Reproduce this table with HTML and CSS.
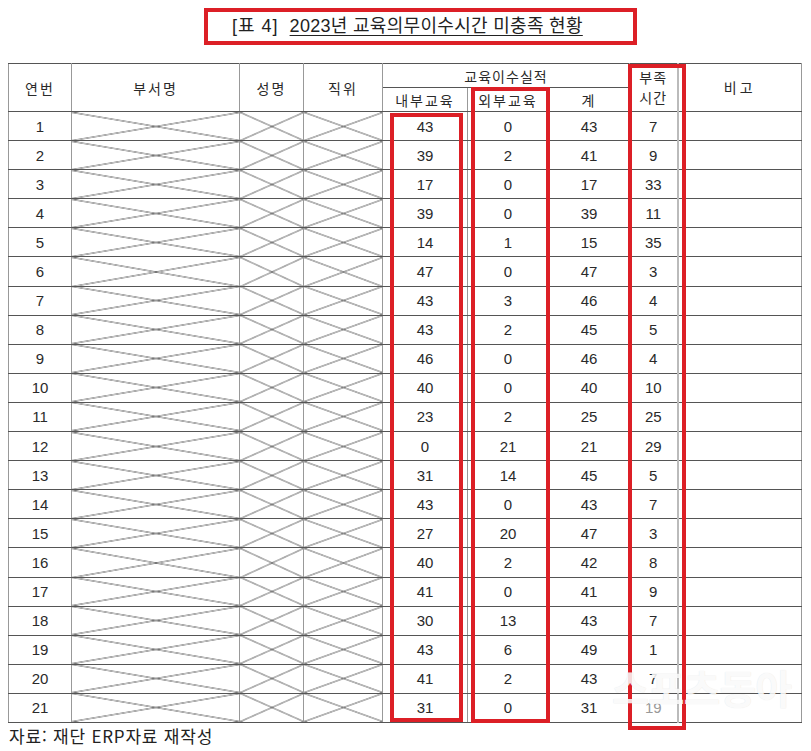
FILE: index.html
```html
<!DOCTYPE html>
<html lang="ko">
<head>
<meta charset="utf-8">
<link rel="stylesheet" href="styles.css">
</head>
<body>
<div class="page">
  <div class="title-row">
    <div class="title-box"><span class="t-label">[표 4]</span> <span class="t-main">2023년 교육의무이수시간 미충족 현황</span></div>
  </div>
  <div class="table-wrap">
    <table class="grid">
      <colgroup>
        <col class="c-no"><col class="c-dept"><col class="c-name"><col class="c-pos">
        <col class="c-in"><col class="c-out"><col class="c-sum"><col class="c-lack"><col class="c-note">
      </colgroup>
      <thead>
        <tr class="h1">
          <th rowspan="2">연번</th>
          <th rowspan="2">부서명</th>
          <th rowspan="2">성명</th>
          <th rowspan="2">직위</th>
          <th colspan="3" class="grp">교육이수실적</th>
          <th rowspan="2" class="lack"><span class="ln">부족</span><span class="ln">시간</span></th>
          <th rowspan="2" class="note">비고</th>
        </tr>
        <tr class="h2">
          <th>내부교육</th>
          <th>외부교육</th>
          <th>계</th>
        </tr>
      </thead>
      <tbody>
        <tr><td>1</td><td class="x"></td><td class="x"></td><td class="x"></td><td>43</td><td>0</td><td>43</td><td>7</td><td class="note"></td></tr>
        <tr><td>2</td><td class="x"></td><td class="x"></td><td class="x"></td><td>39</td><td>2</td><td>41</td><td>9</td><td class="note"></td></tr>
        <tr><td>3</td><td class="x"></td><td class="x"></td><td class="x"></td><td>17</td><td>0</td><td>17</td><td>33</td><td class="note"></td></tr>
        <tr><td>4</td><td class="x"></td><td class="x"></td><td class="x"></td><td>39</td><td>0</td><td>39</td><td>11</td><td class="note"></td></tr>
        <tr><td>5</td><td class="x"></td><td class="x"></td><td class="x"></td><td>14</td><td>1</td><td>15</td><td>35</td><td class="note"></td></tr>
        <tr><td>6</td><td class="x"></td><td class="x"></td><td class="x"></td><td>47</td><td>0</td><td>47</td><td>3</td><td class="note"></td></tr>
        <tr><td>7</td><td class="x"></td><td class="x"></td><td class="x"></td><td>43</td><td>3</td><td>46</td><td>4</td><td class="note"></td></tr>
        <tr><td>8</td><td class="x"></td><td class="x"></td><td class="x"></td><td>43</td><td>2</td><td>45</td><td>5</td><td class="note"></td></tr>
        <tr><td>9</td><td class="x"></td><td class="x"></td><td class="x"></td><td>46</td><td>0</td><td>46</td><td>4</td><td class="note"></td></tr>
        <tr><td>10</td><td class="x"></td><td class="x"></td><td class="x"></td><td>40</td><td>0</td><td>40</td><td>10</td><td class="note"></td></tr>
        <tr><td>11</td><td class="x"></td><td class="x"></td><td class="x"></td><td>23</td><td>2</td><td>25</td><td>25</td><td class="note"></td></tr>
        <tr><td>12</td><td class="x"></td><td class="x"></td><td class="x"></td><td>0</td><td>21</td><td>21</td><td>29</td><td class="note"></td></tr>
        <tr><td>13</td><td class="x"></td><td class="x"></td><td class="x"></td><td>31</td><td>14</td><td>45</td><td>5</td><td class="note"></td></tr>
        <tr><td>14</td><td class="x"></td><td class="x"></td><td class="x"></td><td>43</td><td>0</td><td>43</td><td>7</td><td class="note"></td></tr>
        <tr><td>15</td><td class="x"></td><td class="x"></td><td class="x"></td><td>27</td><td>20</td><td>47</td><td>3</td><td class="note"></td></tr>
        <tr><td>16</td><td class="x"></td><td class="x"></td><td class="x"></td><td>40</td><td>2</td><td>42</td><td>8</td><td class="note"></td></tr>
        <tr><td>17</td><td class="x"></td><td class="x"></td><td class="x"></td><td>41</td><td>0</td><td>41</td><td>9</td><td class="note"></td></tr>
        <tr><td>18</td><td class="x"></td><td class="x"></td><td class="x"></td><td>30</td><td>13</td><td>43</td><td>7</td><td class="note"></td></tr>
        <tr><td>19</td><td class="x"></td><td class="x"></td><td class="x"></td><td>43</td><td>6</td><td>49</td><td>1</td><td class="note"></td></tr>
        <tr><td>20</td><td class="x"></td><td class="x"></td><td class="x"></td><td>41</td><td>2</td><td>43</td><td>7</td><td class="note"></td></tr>
        <tr><td>21</td><td class="x"></td><td class="x"></td><td class="x"></td><td>31</td><td>0</td><td>31</td><td class="faint">19</td><td class="note"></td></tr>
      </tbody>
    </table>
    <div class="hl hl-in"></div>
    <div class="hl hl-out"></div>
    <div class="hl hl-lack"></div>
    <div class="watermark">스포츠동아</div>
  </div>
  <div class="source">자료: 재단 ERP자료 재작성</div>
</div>
</body>
</html>
```
FILE: styles.css
```css
* { box-sizing: border-box; }
html, body { margin: 0; padding: 0; background: #fff; }
body {
  font-family: "Liberation Sans", "Noto Sans CJK KR", sans-serif;
  color: #222;
}
.page {
  width: 811px;
  height: 751px;
  padding: 8px 0 0 8px;
  overflow: hidden;
}
.title-row {
  padding-left: 196px;
  height: 55px;
}
.title-box {
  width: 433px;
  height: 37px;
  border: 4px solid #dc1f26;
  padding-left: 24px;
  font-family: "Liberation Sans", "Noto Sans CJK KR", sans-serif;
  font-size: 18px;
  line-height: 29px;
  color: #222;
  white-space: nowrap;
}
.t-label { margin-right: 6px; letter-spacing: 1px; }
.t-main {
  letter-spacing: 0.3px;
  text-decoration: underline;
  text-underline-offset: 3px;
  text-decoration-thickness: 1px;
}

.table-wrap {
  position: relative;
  width: 793px;
}
.grid {
  width: 793px;
  table-layout: fixed;
  border-collapse: collapse;
  border: 1px solid #444;
}
.c-no { width: 63px; }
.c-dept { width: 168px; }
.c-name { width: 64px; }
.c-pos { width: 79px; }
.c-in { width: 85px; }
.c-out { width: 81px; }
.c-sum { width: 81px; }
.c-lack { width: 48px; }
.c-note { width: 124px; }

.grid th, .grid td {
  padding: 0;
  text-align: center;
  vertical-align: middle;
  border-top: 1px solid #555;
  border-bottom: 1px solid #555;
  border-left: 1px solid #999;
  border-right: 1px solid #999;
  font-weight: normal;
  color: #2a2a2a;
}
.grid th {
  font-family: "Noto Sans CJK KR", sans-serif;
  font-size: 14px;
  letter-spacing: 2px;
}
.grid .h1 { height: 24px; }
.grid .h2 { height: 24px; }
.grid th.lack { letter-spacing: 1px; padding-bottom: 2px; }
.grid th.lack .ln { display: block; line-height: 20px; }
.grid th.note { padding-bottom: 2px; letter-spacing: 3px; }
.grid th.grp { letter-spacing: 1px; }
.grid .note { border-left: 2px solid #bbb; }
.grid td {
  font-size: 15px;
  height: 29.1px;
}
.grid td.x {
  background:
    linear-gradient(to top right, transparent calc(50% - 0.7px), #3a3a3a 50%, transparent calc(50% + 0.7px)),
    linear-gradient(to bottom right, transparent calc(50% - 0.7px), #3a3a3a 50%, transparent calc(50% + 0.7px));
}
.grid td.faint { color: #999; }

.hl {
  position: absolute;
  border: 4px solid #dc1f26;
  pointer-events: none;
}
.hl-in { left: 382px; top: 50px; width: 73px; height: 609px; }
.hl-out { left: 463px; top: 24px; width: 79px; height: 636px; }
.hl-lack { left: 620px; top: 1px; width: 58px; height: 666px; }

.watermark {
  position: absolute;
  left: 604px;
  top: 600px;
  font-family: "Noto Sans CJK KR", sans-serif;
  font-weight: bold;
  font-size: 40px;
  line-height: 48px;
  letter-spacing: -1px;
  color: rgba(255, 255, 255, 0.85);
  text-shadow: 0 0 1px rgba(0, 0, 0, 0.12);
  pointer-events: none;
  white-space: nowrap;
}

.source {
  font-family: "Noto Sans CJK KR", sans-serif;
  font-size: 17px;
  line-height: 26px;
  color: #222;
  letter-spacing: 0.8px;
  padding-left: 1px;
}
```
